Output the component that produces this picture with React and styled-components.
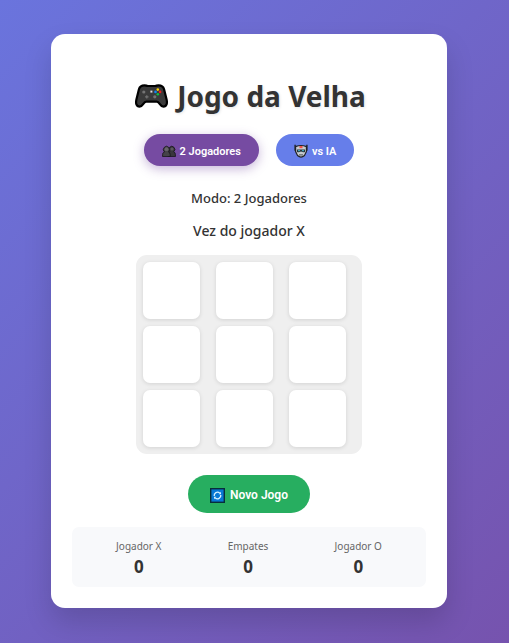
import React, { useState } from "react";
import styled, { createGlobalStyle } from "styled-components";

const GlobalStyle = createGlobalStyle`
  *, *::before, *::after { box-sizing: border-box; }
  body {
    margin: 0;
    color: #333;
    font-family: "Segoe UI", "Noto Sans", sans-serif;
  }
`;

const Page = styled.main`
  min-height: 100vh;
  padding: 34px 62px 34px 51px;
  background: linear-gradient(135deg, #6a74dd 0%, #7653ae 100%);
`;

const Card = styled.section`
  display: flex;
  flex-direction: column;
  align-items: center;
  max-width: 420px;
  margin: 0 auto;
  padding: 42px 21px 21px;
  border-radius: 14px;
  background: #fff;
  box-shadow: 0 14px 28px rgba(0, 0, 0, 0.15);
`;

const Title = styled.h1`
  display: flex;
  align-items: center;
  gap: 9px;
  margin: 0;
  padding-left: 3px;
  font-size: 28px;
  line-height: 40px;
  font-weight: 700;
  white-space: nowrap;
  text-shadow: 1px 1px 3px rgba(0, 0, 0, 0.1);
`;

const Modes = styled.div`
  display: flex;
  gap: 17px;
  margin-top: 18px;
`;

const Button = styled.button`
  display: flex;
  align-items: center;
  justify-content: center;
  border: 0;
  color: #fff;
  font-family: Roboto, Arial, sans-serif;
  white-space: nowrap;
  cursor: pointer;
`;

const ModeButton = styled(Button)`
  gap: 4px;
  height: 32px;
  padding: 2px 18px 0;
  border-radius: 16px;
  font-size: 11px;
  font-weight: 600;
  background: ${(p) => (p.$active ? "#764ba2" : "#667eea")};
  box-shadow: ${(p) => (p.$active ? "0 3px 11px rgba(118, 75, 162, 0.4)" : "none")};
`;

const ResetButton = styled(Button)`
  gap: 5px;
  height: 38px;
  margin-top: 21px;
  padding: 2px 22px 0;
  border-radius: 19px;
  font-size: 12px;
  font-weight: 600;
  background: #27ae60;
`;

const ModeLabel = styled.p`
  margin: 22px 0 0;
  font-size: 13px;
  line-height: 20px;
  font-weight: 500;
`;

const Status = styled.p`
  margin: 12px 0 0;
  font-size: 14px;
  line-height: 22px;
  font-weight: 500;
`;

const Board = styled.div`
  display: grid;
  grid-template-columns: repeat(3, 66px);
  gap: 7px;
  margin-top: 13px;
  padding: 7px;
  border-radius: 11px;
  background: #efefef;
`;

const Cell = styled.button`
  width: 57px;
  height: 57px;
  padding: 0;
  border: 0;
  border-radius: 7px;
  background: #fff;
  box-shadow: 0 1px 4px rgba(0, 0, 0, 0.12);
  color: ${(p) => (p.$mark === "X" ? "#e74c3c" : "#3498db")};
  font: 700 28px "Segoe UI", "Noto Sans", sans-serif;
  cursor: pointer;
`;

const Scores = styled.dl`
  display: flex;
  justify-content: space-around;
  align-self: stretch;
  margin: 14px 0 0;
  padding: 11px;
  border-radius: 7px;
  background: #f8f9fb;
  text-align: center;
`;

const ScoreLabel = styled.dt`
  color: #666;
  font-size: 10px;
  line-height: 16px;
`;

const ScoreValue = styled.dd`
  margin: 4px 0 0;
  font-size: 17px;
  line-height: 18px;
  font-weight: 700;
`;

const Icon = styled.svg`
  display: block;
  flex: none;
`;

const Gamepad = () => (
  <Icon width="33" height="24" viewBox="0 0 33 24" aria-hidden="true">
    <path d="M9.5 1.3C5.8 1.3 4.6 2.8 4 5L1.4 15.5C.6 19.2 1.2 22.7 4.6 22.7C8 22.7 8.2 17.6 11.3 17.6H21.7C24.8 17.6 25 22.7 28.4 22.7C31.8 22.7 32.4 19.2 31.6 15.5L29 5C28.4 2.8 27.2 1.3 23.5 1.3C22 1.3 21.5 2 20 2H13C11.5 2 11 1.3 9.5 1.3Z" fill="#3a3a3a" stroke="#000" strokeWidth="2.2" />
    <circle cx="8.8" cy="8" r="1.6" fill="#747474" />
    <circle cx="19.8" cy="12.8" r="1.6" fill="#747474" />
    <path d="M11.8 11.2v3.4M10.1 12.9h3.4" stroke="#747474" strokeWidth="1.2" />
    <rect x="15.4" y="6.6" width="2" height="2" fill="#ddd" />
    <circle cx="22.8" cy="5.6" r="1.3" fill="#ffd500" />
    <circle cx="20.5" cy="7.9" r="1.3" fill="#1584f5" />
    <circle cx="25.1" cy="7.9" r="1.3" fill="#ef2020" />
    <circle cx="22.8" cy="10.2" r="1.3" fill="#10c040" />
  </Icon>
);

const People = () => (
  <Icon width="14" height="12" viewBox="0 0 14 12" aria-hidden="true">
    <path d="M6 11.6V9.4C6 7.8 7 7.2 8 6.8A3 3 0 1 1 11.6 6.8Q13.4 7.4 13.4 9.4V11.6Z" fill="#39363c" stroke="#1b181d" strokeWidth=".9" />
    <path d="M.6 11.6V9.6C.6 8 1.4 7.3 2.6 7A3.1 3.1 0 1 1 6.4 7Q8.2 7.5 8.2 9.6V11.6Z" fill="#454248" stroke="#1b181d" strokeWidth=".9" />
    <circle cx="4.5" cy="4.2" r="1.9" fill="#68646b" />
    <circle cx="10" cy="4" r="1.6" fill="#5c585f" />
  </Icon>
);

const Robot = () => (
  <Icon width="14" height="14" viewBox="0 0 14 14" aria-hidden="true">
    <path d="M1.1 .8v6M12.9 .8v6" stroke="#222" strokeWidth="1.4" />
    <path d="M1.6 2.6Q7 .4 12.4 2.6V7.5L10.5 11.5Q7 14.6 3.5 11.5L1.6 7.5Z" fill="#c7cbd0" stroke="#202226" strokeWidth="1.2" />
    <path d="M5.5 2h3v2.2h-3Z" fill="#ed5148" />
    <path d="M3 5.4h8v2.6Q9 8.8 7 7.6Q5 8.8 3 8Z" fill="#28343b" />
    <path d="M4.2 6.7h1.6M8.2 6.7h1.6" stroke="#48bfd8" strokeWidth="1.2" />
    <path d="M5 10.9h4" stroke="#4a4f55" strokeWidth="1" />
  </Icon>
);

const Refresh = () => (
  <Icon width="15" height="15" viewBox="0 0 15 15" aria-hidden="true">
    <rect x=".7" y=".7" width="13.6" height="13.6" fill="#0878d5" stroke="#082e3b" strokeWidth="1.4" />
    <path d="M4.2 8A3.4 3.4 0 0 1 9.7 4.9M10.8 7A3.4 3.4 0 0 1 5.3 10.1" fill="none" stroke="#d6f1ff" strokeWidth="1.3" />
    <path d="M8.6 6.2H11V3.8ZM6.4 8.8H4V11.2Z" fill="#d6f1ff" />
  </Icon>
);

const LINES = [[0, 1, 2], [3, 4, 5], [6, 7, 8], [0, 3, 6], [1, 4, 7], [2, 5, 8], [0, 4, 8], [2, 4, 6]];
const EMPTY = Array(9).fill("");

function getResult(cells) {
  const line = LINES.find(([a, b, c]) => cells[a] && cells[a] === cells[b] && cells[a] === cells[c]);
  if (line) return cells[line[0]];
  return cells.every(Boolean) ? "draw" : "";
}

export default function App() {
  const [mode, setMode] = useState("pvp");
  const [cells, setCells] = useState(EMPTY);
  const [scores, setScores] = useState({ X: 0, draw: 0, O: 0 });
  const result = getResult(cells);
  const player = cells.filter(Boolean).length % 2 ? "O" : "X";

  const play = (index) => {
    if (result || cells[index]) return;
    let next = cells.map((cell, i) => (i === index ? player : cell));
    if (mode === "ai" && !getResult(next)) {
      const reply = next.indexOf("");
      next = next.map((cell, i) => (i === reply ? "O" : cell));
    }
    const outcome = getResult(next);
    setCells(next);
    if (outcome) setScores({ ...scores, [outcome]: scores[outcome] + 1 });
  };

  const selectMode = (value) => {
    setMode(value);
    setCells(EMPTY);
  };

  const status = result === "draw" ? "Empate!" : result ? `Jogador ${result} venceu!` : `Vez do jogador ${player}`;

  return (
    <>
      <GlobalStyle />
      <Page>
        <Card>
          <Title><Gamepad />Jogo da Velha</Title>
          <Modes>
            <ModeButton type="button" $active={mode === "pvp"} aria-pressed={mode === "pvp"} onClick={() => selectMode("pvp")}>
              <People />2 Jogadores
            </ModeButton>
            <ModeButton type="button" $active={mode === "ai"} aria-pressed={mode === "ai"} onClick={() => selectMode("ai")}>
              <Robot />vs IA
            </ModeButton>
          </Modes>
          <ModeLabel>{mode === "pvp" ? "Modo: 2 Jogadores" : "Modo: vs IA"}</ModeLabel>
          <Status role="status">{status}</Status>
          <Board>
            {cells.map((mark, i) => (
              <Cell key={i} type="button" $mark={mark} aria-label={`Casa ${i + 1}`} onClick={() => play(i)}>{mark}</Cell>
            ))}
          </Board>
          <ResetButton type="button" onClick={() => setCells(EMPTY)}><Refresh />Novo Jogo</ResetButton>
          <Scores>
            <div><ScoreLabel>Jogador X</ScoreLabel><ScoreValue>{scores.X}</ScoreValue></div>
            <div><ScoreLabel>Empates</ScoreLabel><ScoreValue>{scores.draw}</ScoreValue></div>
            <div><ScoreLabel>Jogador O</ScoreLabel><ScoreValue>{scores.O}</ScoreValue></div>
          </Scores>
        </Card>
      </Page>
    </>
  );
}
